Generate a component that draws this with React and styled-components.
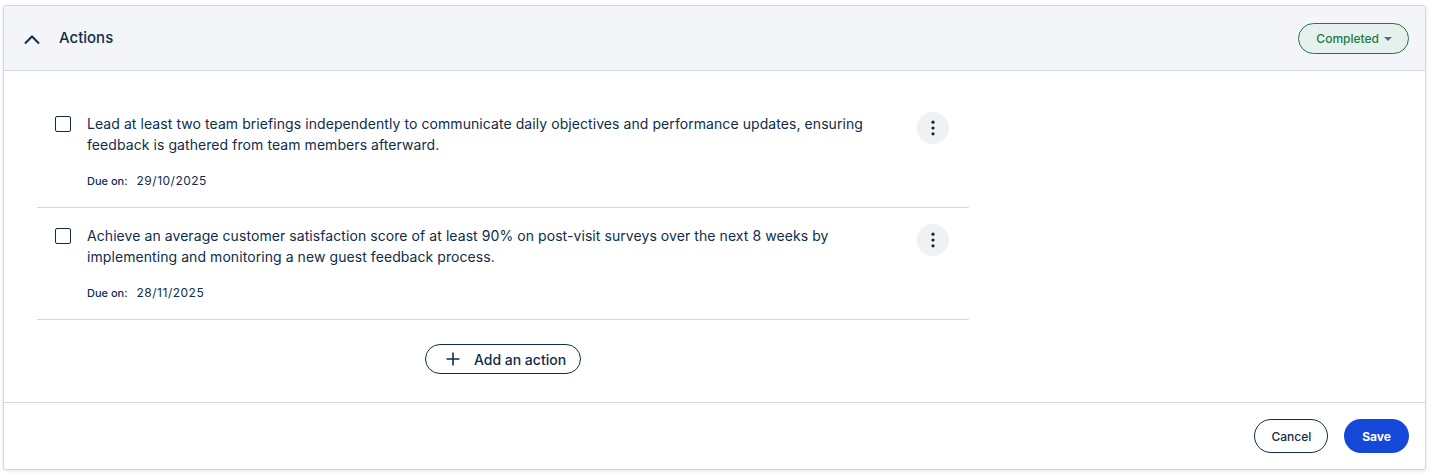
import React from "react";
import styled, { createGlobalStyle } from "styled-components";

const Global = createGlobalStyle`
  html, body { margin: 0; padding: 0; background: #ffffff; }
  body { font-family: Inter, "Noto Sans", sans-serif; color: #0f2d4b; }
  * { box-sizing: border-box; }
`;

const Page = styled.div`
  padding: 5px 12px 6px 3px;
`;

const Card = styled.section`
  border: 1px solid #d3d8e6;
  border-radius: 3px;
  background: #ffffff;
  box-shadow: 0 1px 3px rgba(120, 130, 170, 0.25);
  overflow: hidden;
`;

const Header = styled.div`
  height: 65px;
  display: flex;
  align-items: center;
  padding: 0 16px 0 20px;
  background: #f3f5f9;
  border-bottom: 1px solid #d3d8e6;
`;

const Toggle = styled.button`
  width: 16px;
  height: 16px;
  border: 0;
  padding: 0;
  margin: 3px 19px 0 0;
  background: transparent;
  display: flex;
  align-items: center;
  justify-content: center;
  color: #0f2d4b;
`;

const Title = styled.h2`
  margin: 0 0 2px;
  font-size: 15px;
  font-weight: 500;
  color: #0f2d4b;
  flex: 1;
`;

const StatusPill = styled.button`
  height: 31px;
  display: flex;
  align-items: center;
  gap: 5px;
  padding: 0 16px 0 17px;
  border: 1px solid #1d7a45;
  border-radius: 16px;
  background: #e6f1ee;
  color: #1d7a45;
  font-family: Inter, sans-serif;
  font-size: 12px;
  font-weight: 500;
`;

const Caret = styled.span`
  width: 0;
  height: 0;
  border-left: 4px solid transparent;
  border-right: 4px solid transparent;
  border-top: 4px solid #5d6b7a;
  margin-top: 2px;
`;

const Body = styled.div`
  padding: 25px 0 28px 33px;
  border-bottom: 1px solid #d3d8e6;
`;

const List = styled.div`
  width: 932px;
  display: flex;
  flex-direction: column;
`;

const Item = styled.div`
  display: flex;
  align-items: flex-start;
  padding: 17px 20px 17px 18px;
  border-bottom: 1px solid #d3d8e6;
`;

const Check = styled.span`
  flex: none;
  width: 16px;
  height: 16px;
  border: 1.5px solid #0f2d4b;
  border-radius: 2px;
  margin-top: 3px;
  margin-right: 16px;
`;

const ItemMain = styled.div`
  flex: 1;
  padding-right: 16px;
`;

const ItemText = styled.p`
  margin: 0;
  font-size: 14px;
  line-height: 21px;
  letter-spacing: 0.07px;
  color: #0f2d4b;
`;

const Due = styled.div`
  margin-top: 17px;
  font-size: 11px;
  line-height: 18px;
  color: #0f2d4b;
  display: flex;
  gap: 9px;
`;

const DueLabel = styled.span`
  font-weight: 500;
`;

const DueDate = styled.span`
  font-size: 12px;
  letter-spacing: 0.5px;
`;

const Kebab = styled.button`
  flex: none;
  width: 32px;
  height: 32px;
  margin-top: -1px;
  border: 0;
  border-radius: 50%;
  background: #f0f1f5;
  display: flex;
  align-items: center;
  justify-content: center;
  padding: 0;
`;

const AddRow = styled.div`
  display: flex;
  justify-content: center;
  padding-top: 24px;
`;

const OutlineButton = styled.button`
  height: ${(p) => p.$h}px;
  display: flex;
  align-items: center;
  gap: 14px;
  padding: 0 ${(p) => p.$pr}px 0 ${(p) => p.$pl}px;
  border: 1px solid #0f2d4b;
  border-radius: 999px;
  background: #ffffff;
  color: #0f2d4b;
  font-family: Inter, sans-serif;
  font-size: ${(p) => p.$fs}px;
  font-weight: 500;
`;

const Footer = styled.div`
  display: flex;
  justify-content: flex-end;
  gap: 16px;
  padding: 16px;
`;

const PrimaryButton = styled.button`
  height: 34px;
  padding: 0 18px;
  border: 0;
  border-radius: 999px;
  background: #1547d8;
  color: #ffffff;
  font-family: Inter, sans-serif;
  font-size: 12px;
  font-weight: 700;
`;

const Dots = () => (
  <svg width="4" height="16" viewBox="0 0 4 16">
    <circle cx="2" cy="2.2" r="1.6" fill="#1b2530" />
    <circle cx="2" cy="8" r="1.6" fill="#1b2530" />
    <circle cx="2" cy="13.8" r="1.6" fill="#1b2530" />
  </svg>
);

const actions = [
  {
    text: "Lead at least two team briefings independently to communicate daily objectives and performance updates, ensuring feedback is gathered from team members afterward.",
    due: "29/10/2025",
  },
  {
    text: "Achieve an average customer satisfaction score of at least 90% on post-visit surveys over the next 8 weeks by implementing and monitoring a new guest feedback process.",
    due: "28/11/2025",
  },
];

export default function App() {
  return (
    <Page>
      <Global />
      <Card>
        <Header>
          <Toggle aria-label="Collapse">
            <svg width="16" height="10" viewBox="0 0 16 10">
              <path d="M1 8.5 L8 1.5 L15 8.5" fill="none" stroke="#0f2d4b" strokeWidth="2" />
            </svg>
          </Toggle>
          <Title>Actions</Title>
          <StatusPill>
            Completed <Caret />
          </StatusPill>
        </Header>
        <Body>
          <List>
            {actions.map((a) => (
              <Item key={a.due}>
                <Check />
                <ItemMain>
                  <ItemText>{a.text}</ItemText>
                  <Due>
                    <DueLabel>Due on:</DueLabel>
                    <DueDate>{a.due}</DueDate>
                  </Due>
                </ItemMain>
                <Kebab aria-label="More">
                  <Dots />
                </Kebab>
              </Item>
            ))}
            <AddRow>
              <OutlineButton $h={30} $pl={20} $pr={14} $fs={14}>
                <svg width="14" height="14" viewBox="0 0 14 14">
                  <path d="M7 0.5 V13.5 M0.5 7 H13.5" stroke="#0f2d4b" strokeWidth="1.6" />
                </svg>
                Add an action
              </OutlineButton>
            </AddRow>
          </List>
        </Body>
        <Footer>
          <OutlineButton $h={34} $pl={16} $pr={16} $fs={12}>Cancel</OutlineButton>
          <PrimaryButton>Save</PrimaryButton>
        </Footer>
      </Card>
    </Page>
  );
}
